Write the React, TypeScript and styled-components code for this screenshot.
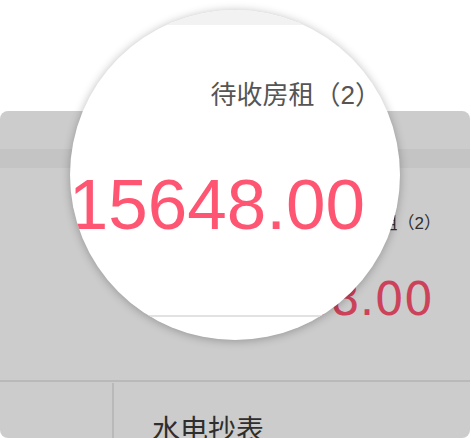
import React from "react";
import styled, { createGlobalStyle } from "styled-components";

const Global = createGlobalStyle`
  html, body { margin: 0; padding: 0; background: #ffffff; }
  body { width: 471px; height: 438px; overflow: hidden; }
  * { box-sizing: border-box; }
`;

const Page = styled.div`
  position: relative;
  width: 471px;
  height: 438px;
  background: #ffffff;
  font-family: "Liberation Sans", "Noto Sans CJK SC", sans-serif;
`;

const Header = styled.div`
  height: 111px;
`;

const Card = styled.div`
  width: 470px;
  height: 327px;
  background: #cccccc;
  border-radius: 8px;
  overflow: hidden;
  display: flex;
  flex-direction: column;
`;

const TopStrip = styled.div`
  height: 38px;
  flex: none;
`;

const Band = styled.div<{ $h: number; $bg: string }>`
  height: ${(p) => p.$h}px;
  background: ${(p) => p.$bg};
  flex: none;
`;

const Summary = styled.div`
  height: 212px;
  flex: none;
  display: flex;
  flex-direction: column;
  align-items: flex-end;
  padding-top: 47px;
`;

const Label = styled.div<{ $size: number; $color: string; $right?: number }>`
  font-size: ${(p) => p.$size}px;
  line-height: ${(p) => p.$size}px;
  color: ${(p) => p.$color};
  margin-right: ${(p) => p.$right ?? 0}px;
  white-space: nowrap;
  display: flex;
`;

const Amount = styled.div<{
  $size: number;
  $color: string;
  $top: number;
  $right?: number;
  $wide?: boolean;
}>`
  margin-top: ${(p) => p.$top}px;
  margin-right: ${(p) => p.$right ?? 0}px;
  font-family: ${(p) =>
    p.$wide ? `"DejaVu Sans", Verdana, sans-serif` : `"Liberation Sans", Arial, sans-serif`};
  font-size: ${(p) => p.$size}px;
  line-height: ${(p) => p.$size}px;
  color: ${(p) => p.$color};
  white-space: nowrap;
`;

const Rule = styled.div`
  height: 2px;
  background: #b9b9b9;
  flex: none;
`;

const BottomRow = styled.div`
  flex: 1;
  min-height: 0;
  overflow: hidden;
  display: flex;
`;

const SideCell = styled.div`
  width: 114px;
  flex: none;
  margin-top: 1px;
  border-right: 2px solid #b9b9b9;
`;

const MenuCell = styled.div`
  padding: 35px 0 0 38px;
  font-family: "Liberation Sans", "Noto Sans CJK SC", sans-serif;
  font-size: 28px;
  line-height: 28px;
  color: #2e2e2e;
  white-space: nowrap;
`;

const Lens = styled.div`
  position: absolute;
  left: 70px;
  top: 10px;
  width: 330px;
  height: 330px;
  border-radius: 50%;
  overflow: hidden;
  background: #ffffff;
  box-shadow: 0 1px 10px rgba(0, 0, 0, 0.28);
  display: flex;
  flex-direction: column;
`;

const LensTitle = styled.div`
  margin-top: 57px;
  display: flex;
  justify-content: flex-end;
  padding-right: 19px;
  flex: none;
`;

const LensAmount = styled.div`
  display: flex;
  justify-content: flex-end;
  padding-right: 35px;
  flex: none;
`;

const LensRule = styled.div`
  margin-top: 75px;
  height: 2px;
  background: #e2e2e2;
  flex: none;
`;

export default function App() {
  return (
    <Page>
      <Global />
      <Header />
      <Card>
        <TopStrip />
        <Band $h={19} $bg="#c4c4c4" />
        <Summary>
          <Label $size={17} $color="#2e2e2e" $right={29}>
            待收房租（2）
          </Label>
          <Amount $size={46} $color="#cc425a" $top={44} $right={37} $wide>
            15648.00
          </Amount>
        </Summary>
        <Rule />
        <BottomRow>
          <SideCell />
          <MenuCell>水电抄表</MenuCell>
        </BottomRow>
      </Card>
      <Lens>
        <Band $h={15} $bg="#f2f2f2" />
        <LensTitle>
          <Label $size={26} $color="#555555">
            待收房租（2）
          </Label>
        </LensTitle>
        <LensAmount>
          <Amount $size={71} $color="#fe5572" $top={61}>
            15648.00
          </Amount>
        </LensAmount>
        <LensRule />
      </Lens>
    </Page>
  );
}
